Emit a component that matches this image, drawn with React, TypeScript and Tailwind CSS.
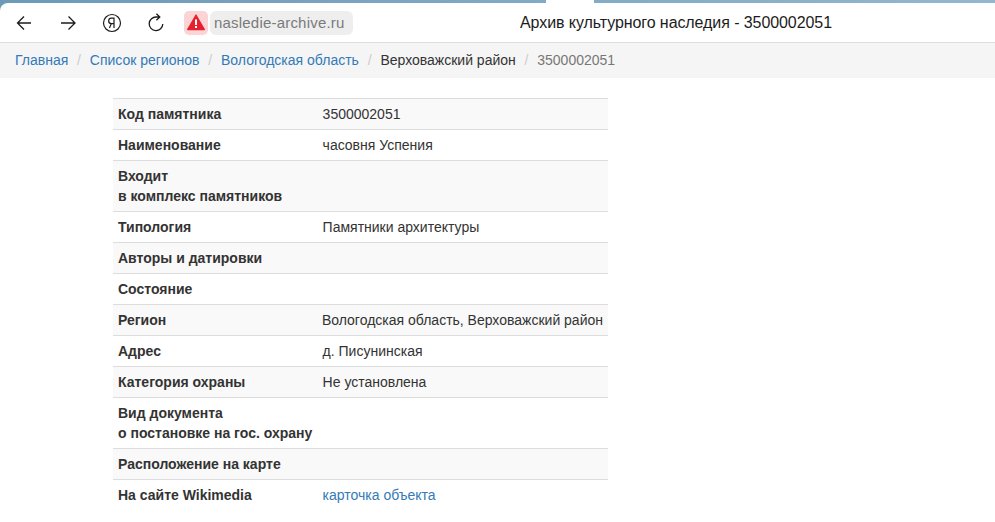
const rows: [string, string[], string?, boolean?][] = [
  ["a", ["Код памятника"], "3500002051"],
  ["b", ["Наименование"], "часовня Успения"],
  ["c", ["Входит", "в комплекс памятников"]],
  ["d", ["Типология"], "Памятники архитектуры"],
  ["e", ["Авторы и датировки"]],
  ["f", ["Состояние"]],
  ["g", ["Регион"], "Вологодская область, Верховажский район"],
  ["h", ["Адрес"], "д. Писунинская"],
  ["i", ["Категория охраны"], "Не установлена"],
  ["j", ["Вид документа", "о постановке на гос. охрану"]],
  ["k", ["Расположение на карте"]],
  ["l", ["На сайте Wikimedia"], "карточка объекта", true],
];

function Sep() {
  return <span className="px-[8.8px] text-[#cccccc]">/</span>;
}

export default function App() {
  return (
    <div className="h-[522px] w-[995px] overflow-hidden bg-white font-['Liberation_Sans',Arial,sans-serif] text-[14px] leading-[20px] text-[#333333]">
      <div className="bg-gradient-to-r from-[#6c9ab7] to-[#93b7ce]">
        <div className="flex h-[3px]">
          <div className="w-[546px] rounded-br-[3px]" />
          <div className="w-[48px] bg-white" />
        </div>
        <header className="flex h-[40px] items-center rounded-tl-[8px] border-b border-[#dedede] bg-white">
          <div className="flex w-[184px] items-center pl-[15px]">
            <svg width="20" height="20" viewBox="0 0 20 20" fill="none" stroke="#1c1c1c" strokeWidth="1.3" className="mr-[23px]">
              <path d="M16 10H2.5M9 3.5 2.5 10 9 16.5" />
            </svg>
            <svg width="20" height="20" viewBox="0 0 20 20" fill="none" stroke="#1c1c1c" strokeWidth="1.3" className="mr-[24px]">
              <path d="M3 10h14M10.5 3.5 17 10l-6.5 6.5" />
            </svg>
            <svg width="20" height="20" viewBox="0 0 20 20" fill="none" stroke="#1c1c1c" strokeWidth="1.2" className="mr-[24px]">
              <circle cx="10" cy="10" r="8.5" />
              <path d="M12 15V5.2H9.6a2.7 2.7 0 0 0-.4 5.4H12M9.4 10.6 7.4 15" />
            </svg>
            <svg width="20" height="20" viewBox="0 0 20 20" fill="none" stroke="#1c1c1c" strokeWidth="1.3">
              <path d="M16.8 11a6.8 6.8 0 1 1-6.4-7h3.4M10.4 .8l3.4 3.2-3.4 3.2" />
            </svg>
          </div>
          <div className="flex h-[24px] w-[24px] items-center justify-center rounded-[5px] bg-[#fbd4d6]">
            <svg width="18" height="17" viewBox="0 0 18 17">
              <path d="M9 1 17.4 15.6H.6Z" fill="#e6202e" stroke="#e6202e" strokeWidth="1.2" strokeLinejoin="round" />
              <rect x="8" y="5.4" width="2" height="5.6" fill="#fff" />
              <rect x="8" y="12" width="2" height="2" fill="#fff" />
            </svg>
          </div>
          <div className="ml-[2px] flex h-[24px] w-[143px] items-center rounded-[6px] bg-[#eeeeee] pl-[4px] text-[15px] tracking-[0.2px] text-[#7a7a7a]">
            nasledie-archive.ru
          </div>
          <div className="ml-[167px] text-[16px] tracking-[-0.08px] whitespace-nowrap text-[#1c1c1c]">
            Архив культурного наследия - 3500002051
          </div>
        </header>
      </div>
      <nav className="flex h-[35px] items-center bg-[#f5f5f5] pb-[2px] pl-[15px]">
        <a className="text-[#337ab7]">Главная</a>
        <Sep />
        <a className="text-[#337ab7]">Список регионов</a>
        <Sep />
        <a className="text-[#337ab7]">Вологодская область</a>
        <Sep />
        <span>Верховажский район</span>
        <Sep />
        <span className="text-[#777777]">3500002051</span>
      </nav>
      <div className="pt-[20px] pl-[113px]">
        <div className="w-[495px]">
          {rows.map(([key, label, value, link], i) => (
            <div key={key} className={`flex border-t border-[#dddddd] p-[5px] ${i % 2 === 0 ? "bg-[#f9f9f9]" : "bg-white"}`}>
              <div className="w-[204.6px] font-bold">
                {label.map((l) => (
                  <div key={l}>{l}</div>
                ))}
              </div>
              {value ? <div className={`whitespace-nowrap ${link ? "text-[#337ab7]" : ""}`}>{value}</div> : null}
            </div>
          ))}
        </div>
      </div>
    </div>
  );
}
